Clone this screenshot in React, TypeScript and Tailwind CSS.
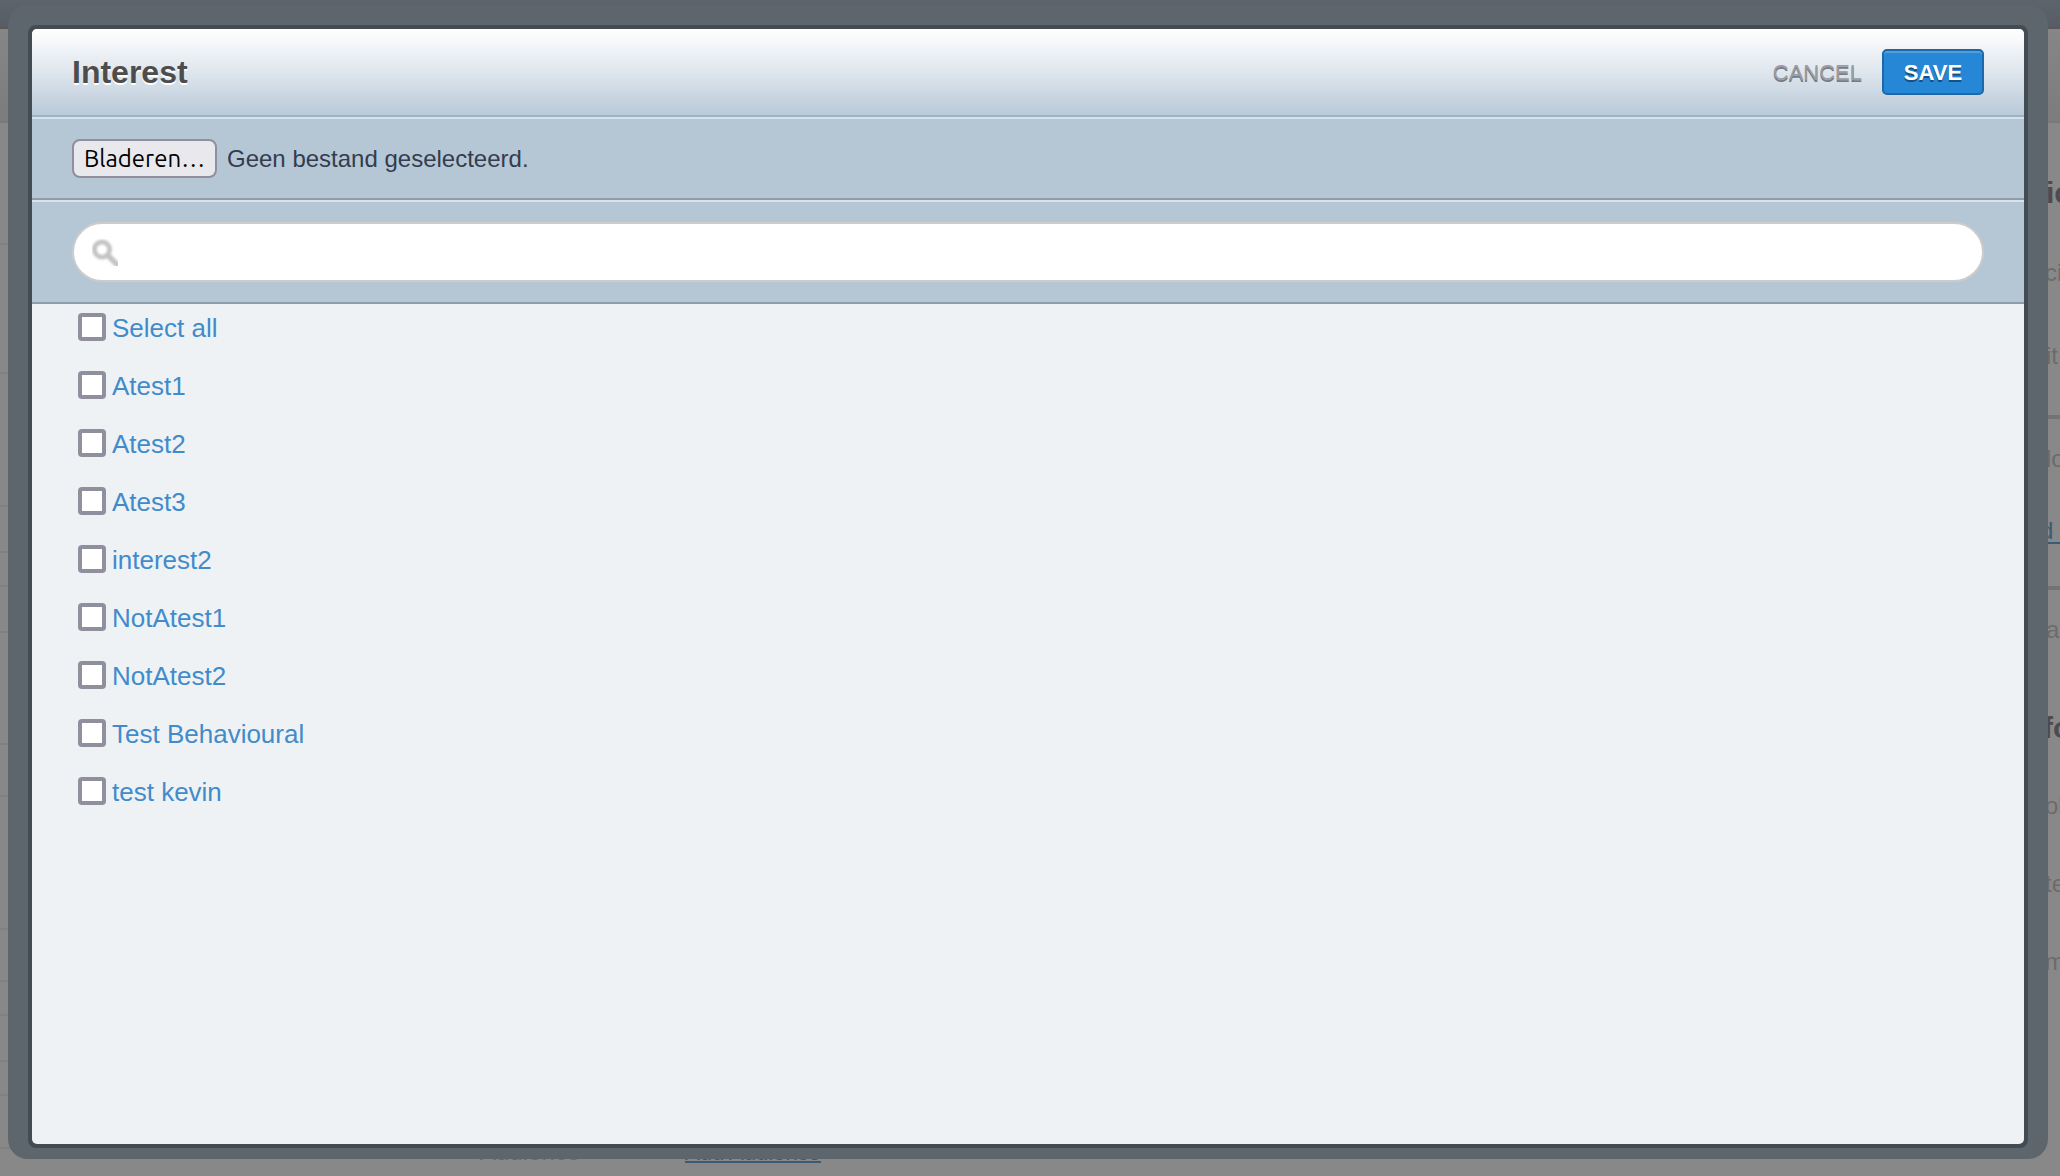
import { useRef, useState } from 'react';

const interests = [
  'Atest1',
  'Atest2',
  'Atest3',
  'interest2',
  'NotAtest1',
  'NotAtest2',
  'Test Behavioural',
  'test kevin',
];

const sidebarRows = [
  'h-[122px]',
  'h-[129px]',
  'h-[133px]',
  'h-[46px]',
  'h-[34px]',
  'h-[46px]',
  'h-[112px]',
  'h-[52px]',
  'h-[133px]',
  'h-[52px]',
  'h-[34px]',
  'h-[46px]',
  'h-[34px]',
  'h-[53px]',
];

export default function App() {
  return (
    <div className="relative h-screen overflow-hidden bg-[#888888] font-['Liberation_Sans',Arial,sans-serif]">
      <Backdrop />
      <div className="absolute top-[5px] right-3 bottom-[17px] left-2 flex rounded-[20px] bg-[#5d656d] px-5 pt-5 pb-[11px]">
        <InterestDialog />
      </div>
    </div>
  );
}

function Backdrop() {
  return (
    <div className="flex h-full flex-col" aria-hidden="true">
      <div className="h-[27px] shrink-0 bg-linear-to-b from-[#5d646b] to-[#565d65]" />
      <div className="h-24 shrink-0 border-t-2 border-b-2 border-t-[#5b5856] border-b-[#767a7d] bg-linear-to-b from-[#868686] to-[#7c7c7c]" />
      <div className="flex min-h-0 flex-1">
        <div className="w-[480px] shrink-0 overflow-hidden">
          {sidebarRows.map((height, i) => (
            <div key={i} className={`${height} border-b-2 border-[#808080]`} />
          ))}
        </div>
        <div className="flex flex-1 items-end gap-[105px] pb-2">
          <span className="text-2xl leading-8 text-[#66686b]">Audience</span>
          <a href="#add" className="mb-[5px] border-b-2 border-[#3b5a75] text-[22px] leading-4 text-[#3b5a75]">
            Add Audience
          </a>
        </div>
        <div className="w-5 shrink-0 overflow-hidden text-2xl leading-8 whitespace-nowrap text-[#6b6b6b]">
          <h2 className="pt-[52px] pl-[6px] text-[30px] leading-9 font-bold text-[#4b4b50]">ic</h2>
          <p className="pt-[46px] pl-[5px]">ci</p>
          <p className="pt-[51px] pl-[6px]">it</p>
          <div className="mt-[43px] h-1 bg-[#737373]" />
          <p className="pt-6 pl-[6px]">lo</p>
          <p className="pt-10">
            <a href="#more" className="text-[#3b5a75] underline decoration-2 underline-offset-3">d m</a>
          </p>
          <div className="mt-[39px] h-1 bg-[#737373]" />
          <p className="pt-6 pl-[6px]">a</p>
          <h2 className="pt-16 pl-[3px] text-[30px] leading-9 font-bold text-[#4b4b50]">fo</h2>
          <p className="pt-11 pl-[5px]">ol</p>
          <p className="pt-[46px] pl-[5px]">te</p>
          <p className="pt-[46px] pl-[5px]">m</p>
        </div>
      </div>
    </div>
  );
}

function InterestDialog() {
  const [query, setQuery] = useState('');
  const [selected, setSelected] = useState<string[]>([]);
  const [fileName, setFileName] = useState('');
  const fileInput = useRef<HTMLInputElement>(null);

  const visible = interests.filter((name) => name.toLowerCase().includes(query.toLowerCase()));

  const toggle = (name: string) => {
    setSelected((prev) => (prev.includes(name) ? prev.filter((n) => n !== name) : [...prev, name]));
  };

  const toggleAll = () => {
    setSelected(selected.length === interests.length ? [] : interests);
  };

  return (
    <div
      role="dialog"
      aria-labelledby="dialog-title"
      className="flex flex-1 flex-col rounded-lg border-4 border-[#444c53] bg-[#444c53]"
    >
      <div className="flex flex-1 flex-col overflow-hidden rounded-[5px] bg-[#eef2f5]">
        <header className="flex h-[88px] items-center justify-between border-b-2 border-[#9ab3c6] bg-linear-to-b from-white via-[#dfe6ed] to-[#b9cad9] px-10">
          <h1 id="dialog-title" className="text-[32px] font-bold text-[#4d4d4d] [text-shadow:0_2px_0_#fff]">
            Interest
          </h1>
          <div className="flex items-center gap-5">
            <button type="button" className="text-[22px] text-[#999ba6] uppercase [text-shadow:0_2px_0_#777b80]">
              Cancel
            </button>
            <button
              type="button"
              className="h-[46px] w-[102px] rounded-[5px] border-2 border-[#1d68ab] bg-[#2687d6] text-[22px] font-bold text-white uppercase shadow-[inset_0_2px_0_#529fde] [text-shadow:0_2px_0_#174f7e]"
            >
              Save
            </button>
          </div>
        </header>

        {/* File upload */}
        <div className="flex h-[83px] items-center gap-[10px] border-t-2 border-b-2 border-t-[#dae3eb] border-b-[#8f9dab] bg-[#b5c7d5] px-10">
          <input
            ref={fileInput}
            type="file"
            aria-label="Bestand"
            className="hidden"
            onChange={(e) => setFileName(e.target.files?.[0]?.name ?? '')}
          />
          <button
            type="button"
            onClick={() => fileInput.current?.click()}
            className="h-[39px] w-[145px] rounded-lg border-2 border-[#8f8f9d] bg-[#e9e9ed] font-['Ubuntu','Noto_Sans',sans-serif] text-2xl leading-8 text-black"
          >
            Bladeren…
          </button>
          <span className="text-2xl text-[#343c4e]">{fileName || 'Geen bestand geselecteerd.'}</span>
        </div>

        {/* Search */}
        <div className="border-t-2 border-b-2 border-t-[#dae3eb] border-b-[#8f9dab] bg-[#b5c7d5] px-10 py-5">
          <label className="flex h-[60px] items-center gap-3 rounded-full border-2 border-[#cccccc] bg-white px-[18px]">
            <SearchIcon />
            <input
              type="text"
              aria-label="Search"
              value={query}
              onChange={(e) => setQuery(e.target.value)}
              className="min-w-0 flex-1 bg-transparent text-2xl text-[#343c4e] outline-none"
            />
          </label>
        </div>

        <div className="flex flex-col gap-[10px] px-[46px]">
          <Option label="Select all" checked={selected.length === interests.length} onChange={toggleAll} />
          {visible.map((name) => (
            <Option key={name} label={name} checked={selected.includes(name)} onChange={() => toggle(name)} />
          ))}
        </div>
      </div>
    </div>
  );
}

function Option({ label, checked, onChange }: { label: string; checked: boolean; onChange: () => void }) {
  return (
    <label className="flex h-12 items-center gap-[6px] self-start text-[26px] text-[#428bca]">
      <input
        type="checkbox"
        checked={checked}
        onChange={onChange}
        className="mb-[2px] h-7 w-7 appearance-none rounded-[4px] border-4 border-[#8f8f9d] bg-white checked:bg-[#2687d6]"
      />
      {label}
    </label>
  );
}

function SearchIcon() {
  return (
    <svg className="h-7 w-[26px] shrink-0" viewBox="0 0 26 28" fill="none" stroke="#c4c4c4" aria-hidden="true">
      <filter id="soften">
        <feGaussianBlur stdDeviation="0.9" />
      </filter>
      <g filter="url(#soften)">
        <circle cx="10" cy="11.5" r="7.6" strokeWidth="4.8" />
        <path d="M15.5 17 L27 28.5" strokeWidth="5.4" />
      </g>
    </svg>
  );
}
